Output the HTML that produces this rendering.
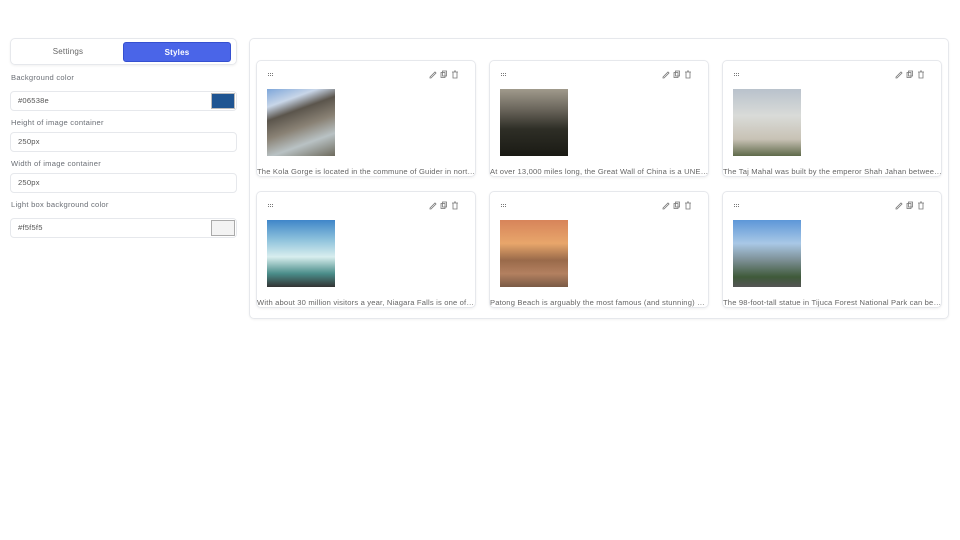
<!DOCTYPE html><html><head><style>
*{box-sizing:border-box;margin:0;padding:0}
body{width:960px;height:540px;background:#fff;font-family:"Liberation Sans",sans-serif;position:relative;overflow:hidden;color:#666}
.abs{position:absolute}
.tabs{left:10px;top:38px;width:227px;height:27px;border:1px solid #e6e8ec;border-radius:5px;box-shadow:0 1px 2px rgba(0,0,0,.06)}
.tab{position:absolute;top:3px;height:20px;font-size:8px;line-height:20px;text-align:center;letter-spacing:.2px}
.lbl{font-size:7.6px;color:#6b6f76;left:11px;letter-spacing:.25px}
.inp{left:10px;width:227px;height:20px;border:1px solid #e6e8ec;border-radius:4px;font-size:7.6px;line-height:18px;padding-left:7px;color:#555;letter-spacing:.2px}
.sw{position:absolute;right:1px;top:1px;width:24px;height:16px;border:1px solid #ccc}
.panel{left:249px;top:38px;width:700px;height:281px;border:1px solid #e6e8ec;border-radius:5px;box-shadow:0 1px 2px rgba(0,0,0,.05)}
.card{position:absolute;width:220px;height:117px;border:1px solid #e6e8ec;border-radius:5px;box-shadow:0 1px 2px rgba(0,0,0,.06)}
.card .img{position:absolute;left:10px;top:28px;width:68px;height:67px}
.card .t{position:absolute;left:0;top:106px;width:219px;font-size:7.6px;letter-spacing:.17px;color:#666;white-space:nowrap;overflow:hidden;text-overflow:ellipsis}
.ic{position:absolute;top:8px;right:15px}
.dt{position:absolute;left:11px;top:12px}
</style></head><body>
<div class="abs tabs"><div class="tab" style="left:2px;width:110px;color:#666">Settings</div><div class="tab" style="left:112px;width:108px;background:#4a65e8;border:1px solid #3550d0;border-radius:3px;color:#fff;font-weight:bold">Styles</div></div>
<div class="abs lbl" style="top:73px">Background color</div>
<div class="abs inp" style="top:91px">#06538e<div class="sw" style="background:#1f5592;border-color:#bbb"></div></div>
<div class="abs lbl" style="top:118px">Height of image container</div>
<div class="abs inp" style="top:132px">250px</div>
<div class="abs lbl" style="top:159px">Width of image container</div>
<div class="abs inp" style="top:173px">250px</div>
<div class="abs lbl" style="top:200px">Light box background color</div>
<div class="abs inp" style="top:218px">#f5f5f5<div class="sw" style="background:#f3f3f3;border-color:#aaa"></div></div>
<div class="abs panel"></div>
<svg width="0" height="0" style="position:absolute"><defs>
<g id="icons" fill="none" stroke="#777" stroke-width="0.8"><path d="M1 8l5-5 1 1-5 5H1z"/><rect x="12" y="3.5" width="4" height="5"/><rect x="13.5" y="2" width="4" height="5"/><path d="M23 3h6M24 3v6h4V3M25 2h2"/></g>
<g id="dots" fill="#777"><rect x="0" y="0" width="1" height="1"/><rect x="2" y="0" width="1" height="1"/><rect x="4" y="0" width="1" height="1"/><rect x="0" y="2" width="1" height="1"/><rect x="2" y="2" width="1" height="1"/><rect x="4" y="2" width="1" height="1"/></g></defs></svg>
<div id="cards"></div>
<script>
var d=[[256,60,"linear-gradient(160deg,#7da6d9 0,#c8d6e8 20%,#5b554c 35%,#8a8275 55%,#b9c2c4 75%,#6d6a5c)","The Kola Gorge is located in the commune of Guider in northern Cameroon"],
[489,60,"linear-gradient(180deg,#a09a8c 0,#6b665c 30%,#2e2e26 60%,#1a1a14)","At over 13,000 miles long, the Great Wall of China is a UNESCO World Heritage Site"],
[722,60,"linear-gradient(180deg,#b9c2cc 0,#d9dbd8 40%,#c8c2b5 75%,#5f6a4a)","The Taj Mahal was built by the emperor Shah Jahan between 1632 and 1653"],
[256,191,"linear-gradient(180deg,#3f86c9 0,#8fc3dc 30%,#d8eeee 55%,#4a8d8a 80%,#333)","With about 30 million visitors a year, Niagara Falls is one of the most visited"],
[489,191,"linear-gradient(180deg,#d7845a 0,#e8a66b 35%,#9a6a4a 60%,#b38060 80%,#7a5a45)","Patong Beach is arguably the most famous (and stunning) of Phuket's beaches"],
[722,191,"linear-gradient(180deg,#5d97d8 0,#a9c8e6 35%,#7c8f95 60%,#3f5a3a 85%,#555)","The 98-foot-tall statue in Tijuca Forest National Park can be seen from everywhere"]];
var h="";d.forEach(function(c){h+='<div class="card" style="left:'+c[0]+'px;top:'+c[1]+'px"><svg class="dt" width="6" height="4"><use href="#dots"/></svg><svg class="ic" width="31" height="10"><use href="#icons"/></svg><div class="img" style="background:'+c[2]+'"></div><div class="t">'+c[3]+'</div></div>'});
document.getElementById("cards").innerHTML=h;
</script>
</body></html>
